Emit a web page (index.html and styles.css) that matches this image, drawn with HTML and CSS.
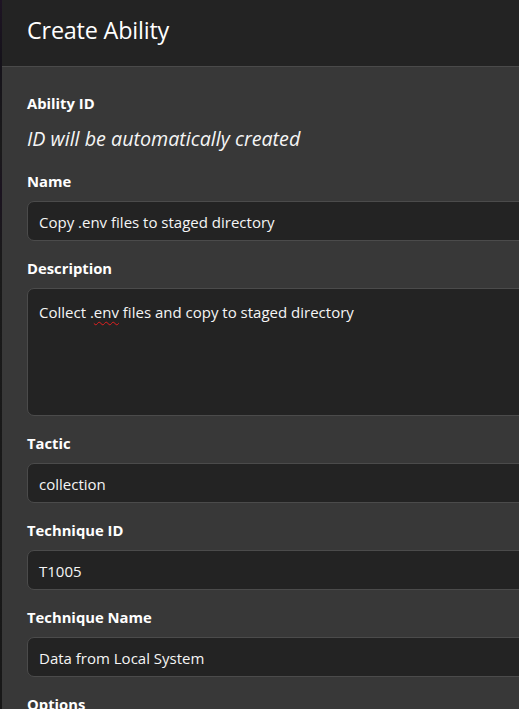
FILE: index.html
```html
<!DOCTYPE html>
<html>
<head>
<meta charset="utf-8">
<link rel="stylesheet" href="styles.css">
</head>
<body>
<div class="page">
  <div class="backdrop"></div>
  <div class="modal">
    <div class="modal-header">
      <h1 class="title">Create Ability</h1>
    </div>
    <div class="modal-body">
      <div class="field">
        <div class="label">Ability ID</div>
        <div class="auto-id">ID will be automatically created</div>
      </div>
      <div class="field">
        <div class="label">Name</div>
        <div class="input">Copy .env files to staged directory</div>
      </div>
      <div class="field">
        <div class="label">Description</div>
        <div class="input textarea">Collect .<span class="spell">env</span> files and copy to staged directory</div>
      </div>
      <div class="field">
        <div class="label">Tactic</div>
        <div class="input">collection</div>
      </div>
      <div class="field">
        <div class="label">Technique ID</div>
        <div class="input">T1005</div>
      </div>
      <div class="field">
        <div class="label">Technique Name</div>
        <div class="input">Data from Local System</div>
      </div>
      <div class="field">
        <div class="label">Options</div>
      </div>
    </div>
  </div>
</div>
</body>
</html>
```
FILE: styles.css
```css
html, body {
  margin: 0;
  padding: 0;
  width: 519px;
  height: 709px;
  overflow: hidden;
  background: #161616;
  font-family: "Open Sans", "Noto Sans", sans-serif;
  color: #f5f5f5;
}
.page {
  display: flex;
  height: 709px;
  overflow: hidden;
}
.backdrop {
  flex: 0 0 2px;
  background: linear-gradient(#1e1424 0, #15121a 60px, #1a1a1a 150px, #1b1320 190px, #1a1a1a 260px, #181818 709px);
}
.modal {
  flex: 0 0 640px;
  display: flex;
  flex-direction: column;
  background: #383838;
}
.modal-header {
  flex: 0 0 auto;
  height: 67px;
  background: #232323;
  border-bottom: 1px solid #4a4a4a;
  display: flex;
  align-items: center;
  padding-left: 25px;
  padding-bottom: 6px;
  box-sizing: border-box;
}
.title {
  margin: 0;
  font-size: 23.4px;
  font-weight: 400;
  color: #ffffff;
  letter-spacing: -0.2px;
}
.modal-body {
  flex: 0 0 auto;
  padding: 20px 0 0 25px;
  display: flex;
  flex-direction: column;
}
.field {
  flex: 0 0 auto;
  display: flex;
  flex-direction: column;
}
.label {
  flex: 0 0 auto;
  font-size: 14.8px;
  font-weight: 700;
  line-height: 32px;
  height: 32px;
  margin-bottom: 4px;
  color: #ffffff;
}
.auto-id {
  flex: 0 0 auto;
  font-style: italic;
  font-size: 19.7px;
  line-height: 38px;
  height: 38px;
  margin-top: -3px;
  margin-bottom: 7px;
  color: #f5f5f5;
}
.input {
  flex: 0 0 auto;
  height: 40px;
  box-sizing: border-box;
  background: #232323;
  border: 1px solid #4b4b4b;
  border-radius: 7px;
  padding: 1px 11px 0;
  font-size: 15px;
  line-height: 38px;
  color: #f5f5f5;
  margin-bottom: 11px;
}
.textarea {
  height: 128px;
  line-height: 20px;
  padding-top: 13px;
}
.spell {
  text-decoration: underline wavy #e0201f;
  text-decoration-thickness: 1px;
  text-underline-offset: 3px;
}
```
